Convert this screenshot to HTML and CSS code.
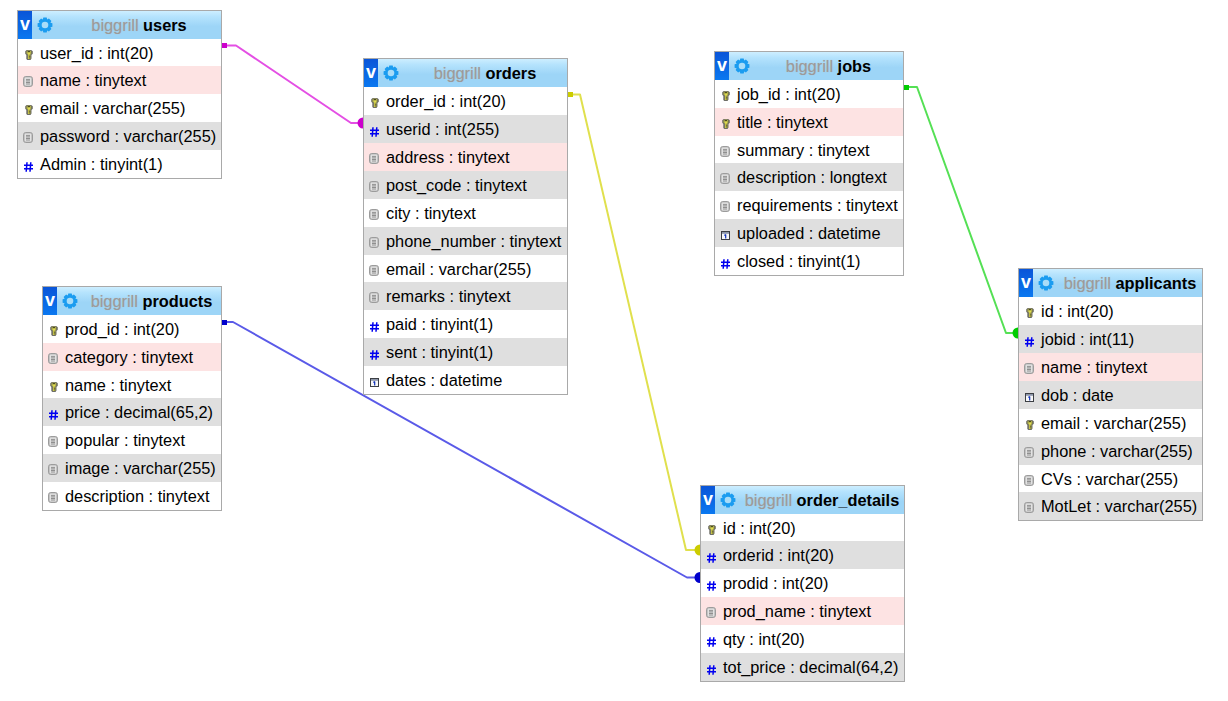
FILE: index.html
```html
<!DOCTYPE html>
<html lang="en">
<head>
<meta charset="utf-8">
<title>biggrill designer</title>
<link rel="stylesheet" href="styles.css">
</head>
<body>
<svg class="defs" width="0" height="0" aria-hidden="true">
  <defs>
    <linearGradient id="keyg" x1="0" y1="0" x2="1" y2="0"><stop offset="0" stop-color="#8a8a50"/><stop offset=".55" stop-color="#f4f050"/><stop offset="1" stop-color="#7a7a48"/></linearGradient>
    <symbol id="i-key" viewBox="0 0 8 10">
      <path d="M.2 1.300 1.700 0h4.500l1.600 1.300v2.500L6.500 4.900v3.700L5.500 10H2.300L1.300 8.900V4.900L.2 3.800z" fill="#6e6e66"/>
      <path d="M1.200 1.500 2.200.8h3.400l1 .7v2L5.400 4.400v4.700H2.900V4.400L1.200 3.500z" fill="url(#keyg)"/>
      <rect x="2.700" y="1.200" width="2.300" height="1" fill="#26261a"/>
      <path d="M4.200 4.600v4M4.200 6.500h1.200M4.200 8h1.200" stroke="#55552a" stroke-width=".7" fill="none"/>
    </symbol>
    <symbol id="i-text" viewBox="0 0 10 11">
      <rect x=".5" y=".5" width="9" height="10" rx="2.300" fill="#c4c4c4" stroke="#9c9c9c"/>
      <rect x="2.300" y="1.800" width="5.400" height="7.400" fill="#f0f0f0"/>
      <path d="M3 3.300h4M3 4.900h4M3 6.400h4M3 8h4" stroke="#777" stroke-width=".9"/>
    </symbol>
    <symbol id="i-num" viewBox="0 0 9 10">
      <path d="M3 .2 2.200 9.800M6.800 .2 6 9.800M0 3.300h9M0 6.800h9" stroke="#0000f0" stroke-width="1.500" fill="none"/>
    </symbol>
    <symbol id="i-date" viewBox="0 0 9 9">
      <rect x=".5" y=".5" width="8" height="8" fill="#f8f8f8" stroke="#3c3f44"/>
      <rect x="1" y="1" width="7" height="1.800" fill="#8c95a8"/>
      <path d="M4.700 3.400v4M3.400 4.500l1.300-1.100" stroke="#0c2fb8" stroke-width="1.200" fill="none"/>
    </symbol>
    <symbol id="i-gear" viewBox="0 0 16 16">
      <path d="M6.300.6h3.400l.5 2 1.700-1 2.500 2.500-1 1.700 2 .5v3.400l-2 .5 1 1.700-2.500 2.500-1.700-1-.5 2H6.300l-.5-2-1.700 1-2.500-2.500 1-1.700-2-.5V6.300l2-.5-1-1.700 2.500-2.500 1.700 1z" fill="#1b9cf0"/>
      <circle cx="8" cy="8" r="3.300" fill="#a8dcf8"/>
    </symbol>
  </defs>
</svg>

<main class="canvas">
  <svg class="links" width="1228" height="701" aria-hidden="true">
    <g class="link magenta"><path class="wire" d="M223 45.500H236L351 123H360"/><rect x="222" y="43" width="5" height="5"/><path d="M363 117.500a5.500 5.500 0 0 0 0 11z"/></g>
    <g class="link yellow"><path class="wire" d="M569 94.500H580L686 550H700"/><rect x="568" y="92" width="5" height="5"/><path d="M700 544.500a5.500 5.500 0 0 0 0 11z"/></g>
    <g class="link blue"><path class="wire" d="M223 322H233L687 577.500H700"/><rect x="222" y="320" width="5" height="5"/><path d="M700 572a5.500 5.500 0 0 0 0 11z"/></g>
    <g class="link green"><path class="wire" d="M905 87H917L1006 333H1018"/><rect x="904" y="85" width="5" height="5"/><path d="M1018 327.500a5.500 5.500 0 0 0 0 11z"/></g>
  </svg>

  <section class="table t-users">
    <header class="head"><span class="toggle">v</span><svg class="gear"><use href="#i-gear"/></svg><h2 class="title"><span class="db">biggrill</span> users</h2></header>
    <div class="row"><svg class="ic key"><use href="#i-key"/></svg>user_id : int(20)</div>
    <div class="row pink"><svg class="ic text"><use href="#i-text"/></svg>name : tinytext</div>
    <div class="row"><svg class="ic key"><use href="#i-key"/></svg>email : varchar(255)</div>
    <div class="row grey"><svg class="ic text"><use href="#i-text"/></svg>password : varchar(255)</div>
    <div class="row"><svg class="ic num"><use href="#i-num"/></svg>Admin : tinyint(1)</div>
  </section>

  <section class="table t-orders">
    <header class="head"><span class="toggle">v</span><svg class="gear"><use href="#i-gear"/></svg><h2 class="title"><span class="db">biggrill</span> orders</h2></header>
    <div class="row"><svg class="ic key"><use href="#i-key"/></svg>order_id : int(20)</div>
    <div class="row grey"><svg class="ic num"><use href="#i-num"/></svg>userid : int(255)</div>
    <div class="row pink"><svg class="ic text"><use href="#i-text"/></svg>address : tinytext</div>
    <div class="row grey"><svg class="ic text"><use href="#i-text"/></svg>post_code : tinytext</div>
    <div class="row"><svg class="ic text"><use href="#i-text"/></svg>city : tinytext</div>
    <div class="row grey"><svg class="ic text"><use href="#i-text"/></svg>phone_number : tinytext</div>
    <div class="row"><svg class="ic text"><use href="#i-text"/></svg>email : varchar(255)</div>
    <div class="row grey"><svg class="ic text"><use href="#i-text"/></svg>remarks : tinytext</div>
    <div class="row"><svg class="ic num"><use href="#i-num"/></svg>paid : tinyint(1)</div>
    <div class="row grey"><svg class="ic num"><use href="#i-num"/></svg>sent : tinyint(1)</div>
    <div class="row"><svg class="ic date"><use href="#i-date"/></svg>dates : datetime</div>
  </section>

  <section class="table t-jobs">
    <header class="head"><span class="toggle">v</span><svg class="gear"><use href="#i-gear"/></svg><h2 class="title"><span class="db">biggrill</span> jobs</h2></header>
    <div class="row"><svg class="ic key"><use href="#i-key"/></svg>job_id : int(20)</div>
    <div class="row pink"><svg class="ic key"><use href="#i-key"/></svg>title : tinytext</div>
    <div class="row"><svg class="ic text"><use href="#i-text"/></svg>summary : tinytext</div>
    <div class="row grey"><svg class="ic text"><use href="#i-text"/></svg>description : longtext</div>
    <div class="row"><svg class="ic text"><use href="#i-text"/></svg>requirements : tinytext</div>
    <div class="row grey"><svg class="ic date"><use href="#i-date"/></svg>uploaded : datetime</div>
    <div class="row"><svg class="ic num"><use href="#i-num"/></svg>closed : tinyint(1)</div>
  </section>

  <section class="table t-products">
    <header class="head"><span class="toggle">v</span><svg class="gear"><use href="#i-gear"/></svg><h2 class="title"><span class="db">biggrill</span> products</h2></header>
    <div class="row"><svg class="ic key"><use href="#i-key"/></svg>prod_id : int(20)</div>
    <div class="row pink"><svg class="ic text"><use href="#i-text"/></svg>category : tinytext</div>
    <div class="row"><svg class="ic key"><use href="#i-key"/></svg>name : tinytext</div>
    <div class="row grey"><svg class="ic num"><use href="#i-num"/></svg>price : decimal(65,2)</div>
    <div class="row"><svg class="ic text"><use href="#i-text"/></svg>popular : tinytext</div>
    <div class="row grey"><svg class="ic text"><use href="#i-text"/></svg>image : varchar(255)</div>
    <div class="row"><svg class="ic text"><use href="#i-text"/></svg>description : tinytext</div>
  </section>

  <section class="table t-applicants">
    <header class="head"><span class="toggle">v</span><svg class="gear"><use href="#i-gear"/></svg><h2 class="title"><span class="db">biggrill</span> applicants</h2></header>
    <div class="row"><svg class="ic key"><use href="#i-key"/></svg>id : int(20)</div>
    <div class="row grey"><svg class="ic num"><use href="#i-num"/></svg>jobid : int(11)</div>
    <div class="row pink"><svg class="ic text"><use href="#i-text"/></svg>name : tinytext</div>
    <div class="row grey"><svg class="ic date"><use href="#i-date"/></svg>dob : date</div>
    <div class="row"><svg class="ic key"><use href="#i-key"/></svg>email : varchar(255)</div>
    <div class="row grey"><svg class="ic text"><use href="#i-text"/></svg>phone : varchar(255)</div>
    <div class="row"><svg class="ic text"><use href="#i-text"/></svg>CVs : varchar(255)</div>
    <div class="row grey"><svg class="ic text"><use href="#i-text"/></svg>MotLet : varchar(255)</div>
  </section>

  <section class="table t-details">
    <header class="head"><span class="toggle">v</span><svg class="gear"><use href="#i-gear"/></svg><h2 class="title"><span class="db">biggrill</span> order_details</h2></header>
    <div class="row"><svg class="ic key"><use href="#i-key"/></svg>id : int(20)</div>
    <div class="row grey"><svg class="ic num"><use href="#i-num"/></svg>orderid : int(20)</div>
    <div class="row"><svg class="ic num"><use href="#i-num"/></svg>prodid : int(20)</div>
    <div class="row pink"><svg class="ic text"><use href="#i-text"/></svg>prod_name : tinytext</div>
    <div class="row"><svg class="ic num"><use href="#i-num"/></svg>qty : int(20)</div>
    <div class="row grey"><svg class="ic num"><use href="#i-num"/></svg>tot_price : decimal(64,2)</div>
  </section>
</main>
</body>
</html>
```
FILE: styles.css
```css
html, body {
  margin: 0;
  padding: 0;
  background: #fff;
}
body {
  font-family: "Liberation Sans", Arial, sans-serif;
  color: #000;
  overflow: hidden;
}
.defs {
  position: absolute;
}
.canvas {
  position: relative;
  width: 1228px;
  height: 701px;
  overflow: hidden;
}
.links {
  position: absolute;
  left: 0;
  top: 0;
}
.wire {
  fill: none;
  stroke-width: 2px;
  stroke-linejoin: round;
}
.magenta .wire { stroke: #e44fe4; }
.magenta rect, .magenta path:not(.wire) { fill: #cc00cc; }
.yellow .wire { stroke: #e0e04d; }
.yellow rect, .yellow path:not(.wire) { fill: #cccc00; }
.blue .wire { stroke: #5a5ae8; }
.blue rect, .blue path:not(.wire) { fill: #0000cc; }
.green .wire { stroke: #55e055; }
.green rect, .green path:not(.wire) { fill: #00cc00; }

.table {
  position: absolute;
  box-sizing: border-box;
  border: 1px solid #a9a9a9;
  background: #fff;
  display: flex;
  flex-direction: column;
}
.t-users { left: 17px; top: 9.6px; width: 205px; }
.t-orders { left: 363px; top: 58.2px; width: 205px; }
.t-jobs { left: 714px; top: 50.8px; width: 190px; }
.t-products { left: 42px; top: 285.8px; width: 180px; }
.t-applicants { left: 1018px; top: 268.2px; width: 185px; }
.t-details { left: 700px; top: 484.6px; width: 205px; }

.head {
  display: flex;
  align-items: center;
  height: 28px;
  background: linear-gradient(to bottom, #cdeeff 0, #b5e3fd 20%, #9dd5f7 55%, #9dd5f7 100%);
  flex: none;
}
.toggle {
  width: 14px;
  height: 28px;
  flex: none;
  background: linear-gradient(to bottom, #0a55d8, #0a78f0);
  color: #fff;
  font-size: 18px;
  font-weight: 700;
  text-align: center;
  line-height: 27px;
}
.gear {
  width: 16px;
  height: 16px;
  flex: none;
  margin-left: 5px;
}
.title {
  flex: 1;
  margin: 0;
  font-size: 16.35px;
  font-weight: 700;
  text-align: center;
  line-height: 27px;
  padding-top: 1px;
  box-sizing: border-box;
  height: 28px;
  white-space: nowrap;
  padding-left: 4px;
}
.db {
  color: #9a9a9a;
  font-weight: 400;
  text-shadow: 0 0 1px #bbb;
}
.row {
  display: grid;
  grid-template-columns: 22px auto;
  justify-content: start;
  align-items: start;
  height: 27.9px;
  font-size: 16.35px;
  line-height: 29px;
  white-space: nowrap;
  flex: none;
}
.row.pink { background: #fde3e3; }
.row.grey { background: #dfdfdf; }
.ic {
  display: block;
}
.ic.key { width: 8px; height: 10px; margin: 11px 0 0 7px; }
.ic.text { width: 10px; height: 11px; margin: 10px 0 0 5px; }
.ic.num { width: 9px; height: 10px; margin: 12px 0 0 6px; }
.ic.date { width: 9px; height: 9px; margin: 12px 0 0 6px; }
```
